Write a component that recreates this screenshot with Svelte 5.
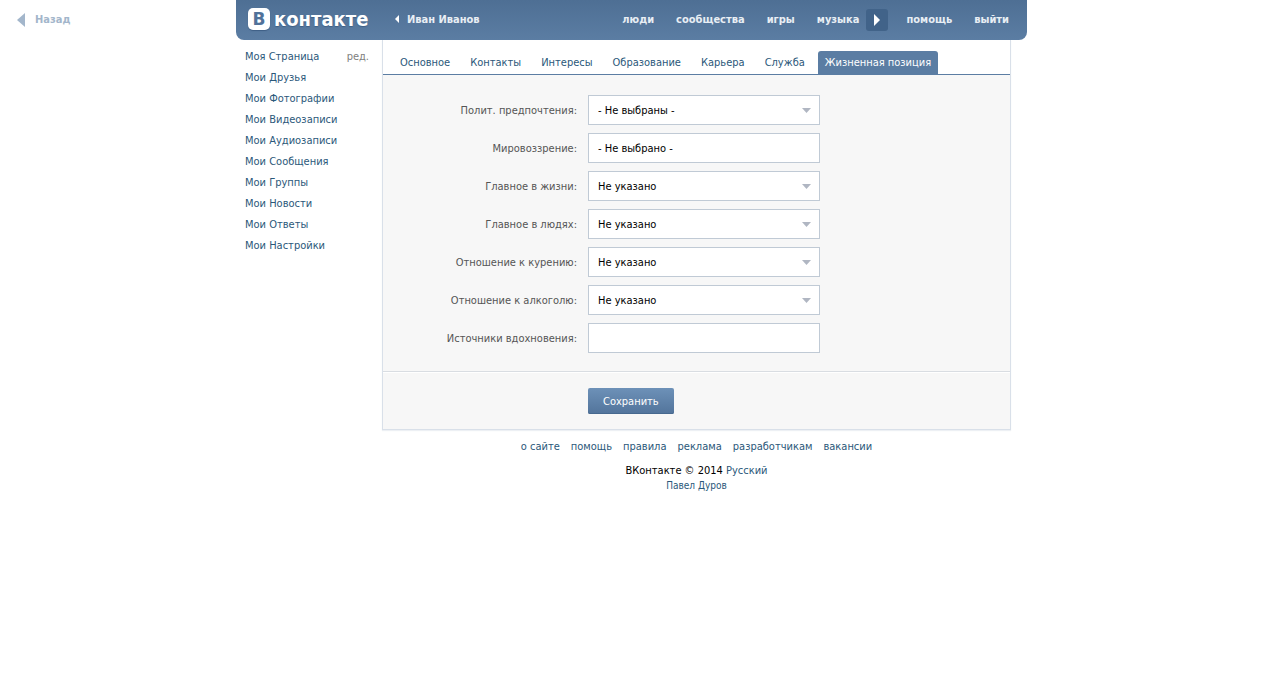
<script lang="ts">
	const menu = ['Моя Страница', 'Мои Друзья', 'Мои Фотографии', 'Мои Видеозаписи', 'Мои Аудиозаписи', 'Мои Сообщения', 'Мои Группы', 'Мои Новости', 'Мои Ответы', 'Мои Настройки'];
	const tabs = ['Основное', 'Контакты', 'Интересы', 'Образование', 'Карьера', 'Служба', 'Жизненная позиция'];
	const footer = ['о сайте', 'помощь', 'правила', 'реклама', 'разработчикам', 'вакансии'];

	const fields = [
		{ id: 'political', label: 'Полит. предпочтения:', value: '- Не выбраны -', type: 'select' },
		{ id: 'religion', label: 'Мировоззрение:', value: '- Не выбрано -', type: 'text' },
		{ id: 'life', label: 'Главное в жизни:', value: 'Не указано', type: 'select' },
		{ id: 'people', label: 'Главное в людях:', value: 'Не указано', type: 'select' },
		{ id: 'smoking', label: 'Отношение к курению:', value: 'Не указано', type: 'select' },
		{ id: 'alcohol', label: 'Отношение к алкоголю:', value: 'Не указано', type: 'select' },
		{ id: 'inspired', label: 'Источники вдохновения:', value: '', type: 'text' }
	];

	let active = $state('Жизненная позиция');
</script>

<a class="back" href="#back">
	<svg width="8" height="14" viewBox="0 0 8 14"><path d="M8 0v14L0 7z" fill="#a3b6cb" /></svg>
	Назад
</a>

<div class="page">
	<header>
		<a class="logo" href="#home">
			<span class="logo-mark">В</span>
			<span class="logo-text">контакте</span>
		</a>
		<a class="user" href="#user">
			<svg width="4" height="8" viewBox="0 0 4 8"><path d="M4 0v8L0 4z" fill="#fff" /></svg>
			Иван Иванов
		</a>
		<nav class="top-nav">
			<a href="#people">люди</a>
			<a href="#communities">сообщества</a>
			<a href="#games">игры</a>
			<span class="music">
				<a href="#music">музыка</a>
				<button class="play" aria-label="Играть">
					<svg width="6" height="12" viewBox="0 0 6 12"><path d="M0 0v12l6-6z" fill="#fff" /></svg>
				</button>
			</span>
			<a href="#help">помощь</a>
			<a href="#logout">выйти</a>
		</nav>
	</header>

	<div class="columns">
		<aside>
			<ul class="menu">
				{#each menu as item, i}
					<li>
						<a href="#menu">{item}</a>
						{#if i === 0}<a class="edit" href="#edit">ред.</a>{/if}
					</li>
				{/each}
			</ul>
		</aside>

		<div class="content">
			<main>
				<nav class="tabs">
					{#each tabs as tab}
						<a href="#tab" class:active={active === tab} onclick={() => (active = tab)}>{tab}</a>
					{/each}
				</nav>
				<form>
					<div class="fields">
						{#each fields as field}
							<div class="row">
								<label for={field.id}>{field.label}</label>
								<div class="control">
									{#if field.type === 'select'}
										<select id={field.id}>
											<option>{field.value}</option>
										</select>
										<svg class="arrow" width="9" height="5" viewBox="0 0 9 5"><path d="M0 0h9L4.5 5z" fill="#b0b6c2" /></svg>
									{:else}
										<input id={field.id} type="text" value={field.value} />
									{/if}
								</div>
							</div>
						{/each}
					</div>
					<div class="actions">
						<button class="save" type="button">Сохранить</button>
					</div>
				</form>
			</main>

			<footer>
				<nav class="footer-nav">
					{#each footer as item}
						<a href="#footer">{item}</a>
					{/each}
				</nav>
				<div>ВКонтакте © 2014 <a href="#lang">Русский</a></div>
				<a class="author" href="#durov">Павел Дуров</a>
			</footer>
		</div>
	</div>
</div>

<style>
	:global(body) {
		background: #fff;
		color: #000;
		font-family: Tahoma, "DejaVu Sans Condensed", sans-serif;
		font-size: 11px;
		line-height: 15px;
	}

	:global(#app) { padding: 0 16px 0 0; }

	a { color: #2b587a; text-decoration: none; }
	svg { display: block; }

	.back {
		position: absolute;
		top: 12px;
		left: 17px;
		display: flex;
		align-items: center;
		gap: 10px;
		color: #a3b6cb;
		font-weight: bold;
	}

	.page { max-width: 791px; margin: 0 auto; }

	header {
		display: flex;
		align-items: center;
		height: 40px;
		padding: 0 18px 2px 12px;
		box-sizing: border-box;
		background: linear-gradient(#4e6f94, #5b7da3);
		border-radius: 0 0 8px 8px;
		font-weight: bold;
	}

	header a { color: #e8eef4; }

	.logo { display: flex; align-items: center; gap: 4px; width: 147px; }

	.logo-mark {
		width: 22px;
		height: 22px;
		border-radius: 5px;
		background: #fff;
		color: #50729a;
		font: bold 17px/22px "DejaVu Sans", sans-serif;
		text-align: center;
		box-shadow: 0 1px 1px #3f5f85;
	}

	.logo-text {
		color: #fff;
		font: bold 20px/22px Tahoma, "DejaVu Sans Condensed", sans-serif;
		text-shadow: 0 1px 1px #3f5f85;
	}

	.user { display: flex; align-items: center; gap: 8px; }
	.top-nav { display: flex; align-items: center; gap: 22px; margin-left: auto; }
	.music { display: flex; align-items: center; gap: 7px; margin-right: -4px; }

	.play {
		display: flex;
		align-items: center;
		justify-content: center;
		width: 22px;
		height: 22px;
		margin: 2px 0 0;
		padding: 0;
		border: 0;
		border-radius: 3px;
		background: #416389;
	}

	.columns { display: flex; padding-right: 16px; }
	aside { width: 146px; flex: none; }
	.menu { list-style: none; margin: 0; padding: 6px 13px 0 9px; }
	.menu li { display: flex; justify-content: space-between; height: 21px; line-height: 21px; }
	.menu .edit { color: #808080; }
	.content { flex: 1; min-width: 0; }

	main {
		border: 1px solid #d9e0e9;
		border-top: 0;
		box-shadow: 0 1px 1px #edf0f4;
		background: #f7f7f7;
	}

	.tabs {
		display: flex;
		gap: 6px;
		padding: 11px 10px 0;
		border-bottom: 1px solid #5b7da3;
		background: #fff;
	}

	.tabs a { padding: 4px 7px; border-radius: 3px 3px 0 0; }
	.tabs .active { background: #5b7da3; color: #fff; }

	.fields {
		display: flex;
		flex-direction: column;
		gap: 8px;
		padding: 20px 0 18px;
		border-bottom: 1px solid #d9dde2;
	}

	.row { display: flex; align-items: center; }
	label { width: 194px; margin-right: 11px; color: #555; text-align: right; }
	.control { position: relative; width: 232px; }

	select, input {
		appearance: none;
		display: block;
		width: 100%;
		height: 30px;
		box-sizing: border-box;
		padding: 0 9px;
		border: 1px solid #c0cad5;
		border-radius: 0;
		background: #fff;
		color: #000;
		font: inherit;
	}

	.arrow { position: absolute; top: 13px; right: 9px; pointer-events: none; }
	.actions { padding: 15px 0 15px 205px; border-top: 1px solid #fff; }

	.save {
		height: 26px;
		padding: 0 15px;
		border: 0;
		border-radius: 2px;
		background: linear-gradient(#6d91b8, #52749b);
		box-shadow: inset 0 -1px #47698f;
		color: #fff;
		font: inherit;
		display: block;
	}

	footer { padding-top: 9px; text-align: center; }
	.footer-nav { display: flex; justify-content: center; gap: 11px; margin-bottom: 9px; }
	.author { font-size: 10px; }
</style>
